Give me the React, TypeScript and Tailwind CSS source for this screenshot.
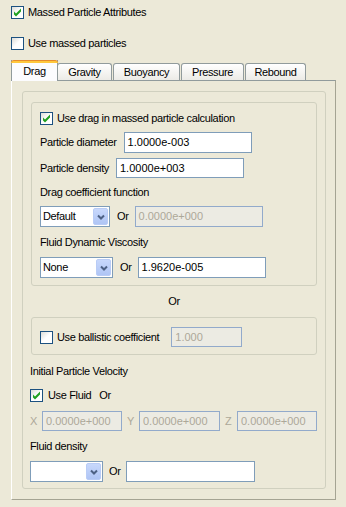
import React from "react"

function CheckBox({ checked }: { checked?: boolean }) {
  return (
    <div className="w-[13px] h-[13px] shrink-0 border border-[#1C5180] bg-linear-to-br from-[#DCDCD7] via-white to-white">
      {checked && (
        <svg width="11" height="11" viewBox="0 0 11 11">
          <polygon points="2,4.5 4,6.5 9,1.5 9,4.5 4,9.5 2,7.5" fill="#21A121" />
        </svg>
      )}
    </div>
  )
}

function Field({ value, width, disabled }: { value: string; width: string; disabled?: boolean }) {
  return (
    <div
      className={`h-[20px] shrink-0 border flex items-center pl-[3px] tracking-normal ${width} ${
        disabled ? "bg-[#ECEBE3] border-[#92AACB] text-[#ACA899]" : "bg-white border-[#7F9DB9] text-black"
      }`}
    >
      {value}
    </div>
  )
}

function Combo({ value, width }: { value: string; width: string }) {
  return (
    <div className={`h-[21px] shrink-0 border border-[#7F9DB9] bg-white flex items-center p-px ${width}`}>
      <span className="flex-1 pl-px">{value}</span>
      <div className="w-[15px] h-full rounded-[2px] border border-[#B9CCF6] bg-linear-to-b from-[#C8D8FC] to-[#AFC5F5] flex items-center justify-center">
        <svg width="8" height="6" viewBox="0 0 8 6">
          <polyline points="1,1.5 4,4.5 7,1.5" fill="none" stroke="#4D6185" strokeWidth="2" />
        </svg>
      </div>
    </div>
  )
}

function Tab({ label, width, selected, first }: { label: string; width: string; selected?: boolean; first?: boolean }) {
  if (selected) {
    return (
      <div
        className={`relative z-10 -mb-px h-[21px] ${width} bg-[#FCFCFE] border-l border-r border-[#919B9C] flex items-center justify-center pb-[1px]`}
      >
        <div className="absolute -left-px -right-px top-0 h-[3px] rounded-t-[3px] bg-[#FFC83C] border-t border-[#E68B2C]" />
        <span className="pt-[3px]">{label}</span>
      </div>
    )
  }
  return (
    <div
      className={`h-[17px] ${width} ${first ? "-ml-px" : "ml-px"} rounded-t-[3px] border border-b-0 border-[#919B9C] bg-linear-to-b from-white to-[#ECEBE6] flex items-center justify-center pt-[1px]`}
    >
      {label}
    </div>
  )
}

export default function App() {
  return (
    <div className="w-[346px] h-[507px] bg-[#ECE9D8] pl-[11px] pt-[6px] text-[11px] leading-[13px] tracking-[-0.35px] text-black font-['Liberation_Sans',Arial,sans-serif]">
      <div className="flex items-center h-[13px]">
        <CheckBox checked />
        <span className="ml-[4px]">Massed Particle Attributes</span>
      </div>
      <div className="flex items-center h-[13px] mt-[18px]">
        <CheckBox />
        <span className="ml-[4px]">Use massed particles</span>
      </div>

      <div className="flex items-end h-[20px] mt-[10px]">
        <Tab label="Drag" width="w-[47px]" selected />
        <Tab label="Gravity" width="w-[55px]" first />
        <Tab label="Buoyancy" width="w-[67px]" />
        <Tab label="Pressure" width="w-[63px]" />
        <Tab label="Rebound" width="w-[61px]" />
      </div>

      <div className="w-[325px] h-[420px] border-t border-r border-b border-l border-t-[#919B9C] border-r-[#A5A493] border-b-[#A5A493] border-l-white pt-[10px] pl-[10px]">
        <div className="w-[304px] border border-[#D0D0BF] rounded-[3px] pt-[10px] px-[8px] pb-[6px]">
          {/* drag group */}
          <div className="border border-[#D0D0BF] rounded-[3px] pt-[9px] pl-[8px] pb-[7px]">
            <div className="flex items-center h-[13px]">
              <CheckBox checked />
              <span className="ml-[4px]">Use drag in massed particle calculation</span>
            </div>
            <div className="flex items-center gap-[7px] mt-[7px] h-[21px]">
              <span>Particle diameter</span>
              <Field value="1.0000e-003" width="w-[128px] h-[21px]" />
            </div>
            <div className="flex items-center gap-[7px] mt-[5px] h-[20px]">
              <span>Particle density</span>
              <Field value="1.0000e+003" width="w-[128px]" />
            </div>
            <div className="mt-[8px]">Drag coefficient function</div>
            <div className="flex items-center mt-[7px]">
              <Combo value="Default" width="w-[70px]" />
              <span className="ml-[7px] mr-[6px]">Or</span>
              <Field value="0.0000e+000" width="w-[128px] h-[21px]" disabled />
            </div>
            <div className="mt-[9px]">Fluid Dynamic Viscosity</div>
            <div className="flex items-center mt-[8px]">
              <Combo value="None" width="w-[73px]" />
              <span className="ml-[7px] mr-[6px]">Or</span>
              <Field value="1.9620e-005" width="w-[128px] h-[21px]" />
            </div>
          </div>

          <div className="mt-[9px] text-center">Or</div>

          {/* ballistic group */}
          <div className="mt-[9px] border border-[#D0D0BF] rounded-[3px] pt-[9px] pl-[8px] pb-[7px]">
            <div className="flex items-center h-[20px]">
              <CheckBox />
              <span className="ml-[4px]">Use ballistic coefficient</span>
              <div className="ml-[12px]">
                <Field value="1.000" width="w-[71px]" disabled />
              </div>
            </div>
          </div>

          <div className="mt-[10px] -ml-px">Initial Particle Velocity</div>
          <div className="flex items-center h-[13px] mt-[11px] -ml-px">
            <CheckBox checked />
            <span className="ml-[5px]">Use Fluid</span>
            <span className="ml-[8px]">Or</span>
          </div>
          <div className="flex items-center mt-[9px] -ml-px">
            <span className="w-[12px] text-[#ACA899]">X</span>
            <Field value="0.0000e+000" width="w-[80px]" disabled />
            <span className="w-[12px] ml-[5px] text-[#ACA899]">Y</span>
            <Field value="0.0000e+000" width="w-[81px]" disabled />
            <span className="w-[12px] ml-[5px] text-[#ACA899]">Z</span>
            <Field value="0.0000e+000" width="w-[80px]" disabled />
          </div>
          <div className="mt-[9px] -ml-px">Fluid density</div>
          <div className="flex items-center mt-[8px] -ml-px">
            <Combo value="" width="w-[73px]" />
            <span className="ml-[6px] mr-[5px]">Or</span>
            <Field value="" width="w-[129px] h-[21px]" />
          </div>
        </div>
      </div>
    </div>
  )
}
